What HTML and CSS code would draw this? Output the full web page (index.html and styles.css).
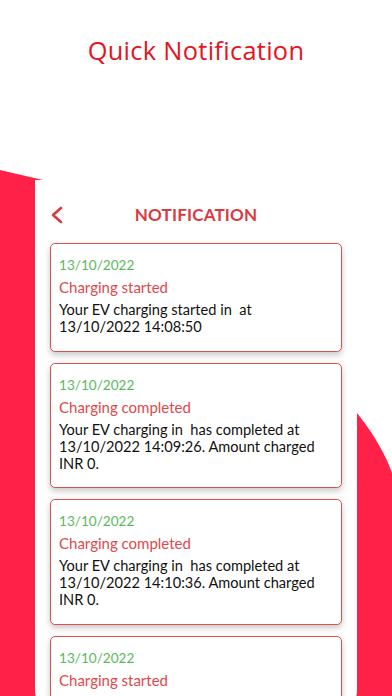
FILE: index.html
```html
<!DOCTYPE html>
<html>
<head>
<meta charset="utf-8">
<link rel="stylesheet" href="styles.css">
</head>
<body>
<div class="screen">
  <svg class="backdrop" width="392" height="696" viewBox="0 0 392 696" aria-hidden="true">
    <polygon points="0,170 60,184 60,696 0,696" fill="#FF2147"/>
    <path d="M340,400 L357,413 C366,424 374,436 380,447 C385,456 389,464 392,473 L392,696 L340,696 Z" fill="#FF2147"/>
  </svg>
  <h1 class="title">Quick Notification</h1>
  <div class="panel">
    <div class="topbar">
      <svg class="back" width="14" height="18" viewBox="0 0 14 18" aria-hidden="true">
        <polyline points="11,2 3,9 11,16" fill="none" stroke="#D93A3F" stroke-width="2.6" stroke-linecap="round" stroke-linejoin="round"/>
      </svg>
      <div class="heading">NOTIFICATION</div>
      <div></div>
    </div>
    <div class="list">
      <div class="card">
        <div class="date">13/10/2022</div>
        <div class="kind">Charging started</div>
        <div class="msg">Your EV charging started in&nbsp; at<br>13/10/2022 14:08:50</div>
      </div>
      <div class="card">
        <div class="date">13/10/2022</div>
        <div class="kind">Charging completed</div>
        <div class="msg">Your EV charging in&nbsp; has completed at<br>13/10/2022 14:09:26. Amount charged<br>INR 0.</div>
      </div>
      <div class="card">
        <div class="date">13/10/2022</div>
        <div class="kind">Charging completed</div>
        <div class="msg">Your EV charging in&nbsp; has completed at<br>13/10/2022 14:10:36. Amount charged<br>INR 0.</div>
      </div>
      <div class="card">
        <div class="date">13/10/2022</div>
        <div class="kind">Charging started</div>
        <div class="msg">Your EV charging started in&nbsp; at<br>13/10/2022 14:12:02</div>
      </div>
    </div>
  </div>
</div>
</body>
</html>
```
FILE: styles.css
```css
* { box-sizing: border-box; }
html, body { margin: 0; padding: 0; background: #fff; }
.screen {
  position: relative;
  width: 392px;
  height: 696px;
  overflow: hidden;
  background: #fff;
}
.backdrop { position: absolute; left: 0; top: 0; }
.title {
  position: relative;
  margin: 0;
  padding-top: 35px;
  height: 180px;
  text-align: center;
  font-family: "Open Sans", sans-serif;
  font-weight: 400;
  font-size: 25.4px;
  line-height: 30px;
  color: #E5141E;
  letter-spacing: 0.3px;
}
.panel {
  position: relative;
  margin-left: 35px;
  width: 322px;
  height: 540px;
  background: #fff;
  border-radius: 0 0 30px 30px;
  padding: 24px 15px 0;
  overflow: hidden;
}
.topbar {
  display: grid;
  grid-template-columns: 1fr auto 1fr;
  align-items: center;
  height: 20px;
}
.back { display: block; }
.heading {
  font-family: "Lato", sans-serif;
  font-weight: 700;
  font-size: 17px;
  color: #D93A3F;
  letter-spacing: 0.2px;
}
.list {
  display: flex;
  flex-direction: column;
  gap: 11px;
  margin-top: 19px;
}
.card {
  width: 292px;
  border: 1.5px solid #D9524F;
  border-radius: 5px;
  background: #fff;
  padding: 10px 8px 15.5px;
  box-shadow: 0 3px 6px rgba(0,0,0,0.22);
  font-family: "Lato", sans-serif;
}
.date {
  font-size: 13.6px;
  line-height: 22px;
  color: #5CB85C;
}
.kind {
  font-size: 15px;
  line-height: 22px;
  color: #E0484A;
}
.msg {
  margin-top: 3px;
  font-size: 14.6px;
  line-height: 17px;
  color: #111;
}
```
